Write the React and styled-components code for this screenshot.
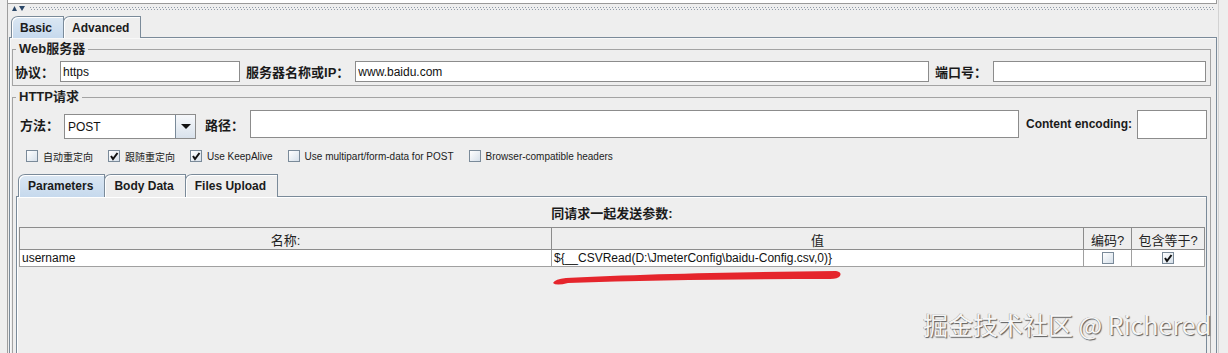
import styled, { createGlobalStyle } from "styled-components";

const GlobalStyle = createGlobalStyle`
  html, body {
    margin: 0;
    padding: 0;
    background: #eeeeee;
  }
  body {
    font-family: "Liberation Sans", "Noto Sans CJK SC", sans-serif;
    color: #111;
  }
  * { box-sizing: border-box; }
`;

const options = [
  { label: "自动重定向", checked: false },
  { label: "跟随重定向", checked: true },
  { label: "Use KeepAlive", checked: true },
  { label: "Use multipart/form-data for POST", checked: false },
  { label: "Browser-compatible headers", checked: false },
];

export default function App() {
  return (
    <>
      <GlobalStyle />
      <Page>
        <Frame>
          <TopStub />
          <Splitter>
            <svg width="14" height="5" viewBox="0 0 14 5">
              <path d="M0 5 L2.5 0 L5 5 Z" fill="#2b4768" />
              <path d="M7 0 L13 0 L10 5 Z" fill="#2b4768" />
            </svg>
            <Dots />
          </Splitter>

          <TabStrip $pad={3}>
            <Tab $active>Basic</Tab>
            <Tab>Advanced</Tab>
          </TabStrip>

          <TabPane>
            <Group>
              <Legend>Web服务器</Legend>
              <FieldRow>
                <Label>协议：</Label>
                <TextInput $w={180} defaultValue="https" readOnly />
                <Label>服务器名称或IP：</Label>
                <TextInput $grow defaultValue="www.baidu.com" readOnly />
                <Label>端口号：</Label>
                <TextInput $w={213} readOnly />
              </FieldRow>
            </Group>

            <Group>
              <Legend>HTTP请求</Legend>
              <MethodRow>
                <Label>方法：</Label>
                <Combo $ml={5}>
                  <ComboText>POST</ComboText>
                  <ComboButton>
                    <Caret />
                  </ComboButton>
                </Combo>
                <Label $ml={9}>路径：</Label>
                <TextInput $ml={6} $h={28} $grow readOnly />
                <Label $ml={7} $size={12}>Content encoding:</Label>
                <TextInput $ml={5} $h={29} $w={70} readOnly />
              </MethodRow>

              <OptionRow>
                {options.map((o) => (
                  <Option key={o.label}>
                    <CheckBox checked={o.checked} />
                    <OptionText>{o.label}</OptionText>
                  </Option>
                ))}
              </OptionRow>

              <TabStrip $pad={3} $top={12} $h={22}>
                <Tab $active $small>Parameters</Tab>
                <Tab $small>Body Data</Tab>
                <Tab $small>Files Upload</Tab>
              </TabStrip>

              <ParamPane>
                <Caption>同请求一起发送参数:</Caption>
                <Table>
                  <colgroup>
                    <col style={{ width: 532 }} />
                    <col style={{ width: 532 }} />
                    <col style={{ width: 48 }} />
                    <col style={{ width: 73 }} />
                  </colgroup>
                  <thead>
                    <tr>
                      <Th>名称:</Th>
                      <Th>值</Th>
                      <Th>编码?</Th>
                      <Th>包含等于?</Th>
                    </tr>
                  </thead>
                  <tbody>
                    <tr>
                      <Td>username</Td>
                      <Td>{"${__CSVRead(D:\\JmeterConfig\\baidu-Config.csv,0)}"}</Td>
                      <Td $center>
                        <CheckBox />
                      </Td>
                      <Td $center>
                        <CheckBox checked />
                      </Td>
                    </tr>
                  </tbody>
                </Table>
              </ParamPane>
            </Group>
          </TabPane>
        </Frame>

        <Scribble width="300" height="24" viewBox="548 264 300 24">
          <path
            d="M553 283 Q555 279 566 278 C640 274 740 272 836 271 Q842 272 840 276 Q838 279 830 279 C740 279 650 280 568 283 Q556 286 553 283 Z"
            fill="#e5252c"
          />
        </Scribble>

        <Watermark>掘金技术社区 @ Richered</Watermark>
      </Page>
    </>
  );
}

function CheckBox({ checked }) {
  return (
    <Box>
      {checked && (
        <svg width="10" height="10" viewBox="0 0 10 10">
          <path d="M2 5 L4 8 L8.5 2" stroke="#111" strokeWidth="2" fill="none" />
        </svg>
      )}
    </Box>
  );
}

const Page = styled.div`
  position: relative;
  width: 1228px;
  height: 353px;
  overflow: hidden;
`;

const Frame = styled.div`
  margin-left: 7px;
  width: 1212px;
  min-height: 353px;
  border-left: 1px solid #9e9e9e;
  border-right: 1px solid #d2d2d2;
`;

const TopStub = styled.div`
  height: 4px;
  margin-right: 1px;
  background: #ffffff;
  border-bottom: 1px solid #9a9a9a;
  border-right: 1px solid #9a9a9a;
`;

const Splitter = styled.div`
  height: 8px;
  display: flex;
  align-items: center;
  gap: 4px;
  padding-left: 4px;
  padding-right: 3px;
`;

const Dots = styled.div`
  flex: 1;
  height: 3px;
  background-image: linear-gradient(90deg, #8e9aa8 1px, transparent 1px),
    linear-gradient(90deg, #8e9aa8 1px, transparent 1px);
  background-size: 3px 1px, 3px 1px;
  background-position: 0 0, 1px 2px;
  background-repeat: repeat-x;
`;

const TabStrip = styled.div`
  position: relative;
  z-index: 1;
  display: flex;
  align-items: flex-end;
  height: ${({ $h }) => $h || 21}px;
  margin-top: ${({ $top }) => $top || 4}px;
  padding-left: ${({ $pad }) => $pad}px;
`;

const Tab = styled.div`
  display: flex;
  align-items: center;
  height: ${({ $small }) => ($small ? 23 : 22)}px;
  margin-bottom: -1px;
  margin-right: -1px;
  padding: 0 ${({ $small }) => ($small ? 11 : 11)}px 0 ${({ $small }) => ($small ? 9 : 8)}px;
  border: 1px solid #7a8a99;
  border-bottom: none;
  border-top-left-radius: 7px 6px;
  font-size: 12px;
  font-weight: bold;
  color: #1b1b1b;
  background: ${({ $active }) =>
    $active ? "linear-gradient(180deg, #dbe7f3 0%, #c6d9ed 100%)" : "#eeeeee"};
  box-shadow: inset 1px 1px 0 #ffffff;
`;

const TabPane = styled.div`
  height: 316px;
  margin: 0 1px;
  padding: 0 5px 0 2px;
  border: 1px solid #7a8a99;
  border-bottom: none;
  background: #eeeeee;
  box-shadow: inset 1px 1px 0 #f8f8f8;
`;

const Group = styled.fieldset`
  margin: 2px 0 0;
  padding: 0 3px 3px 2px;
  min-width: 0;
  border: 1px solid #a3a3a3;
`;

const Legend = styled.legend`
  margin-left: 1px;
  padding: 0 3px;
  font-size: 13px;
  font-weight: bold;
  line-height: 18px;
  color: #1e1e1e;
`;

const FieldRow = styled.div`
  display: flex;
  align-items: center;
  gap: 6px;
  height: 21px;
  margin-top: 3px;
  padding-right: 1px;
`;

const MethodRow = styled.div`
  display: flex;
  align-items: center;
  height: 30px;
  margin-top: 3px;
  padding-left: 5px;
`;

const Label = styled.span`
  margin-left: ${({ $ml }) => $ml || 0}px;
  font-size: ${({ $size }) => $size || 13}px;
  font-weight: bold;
  white-space: nowrap;
  color: #1a1a1a;
`;

const TextInput = styled.input`
  flex: ${({ $grow }) => ($grow ? "1 1 0" : "none")};
  width: ${({ $w }) => ($w ? `${$w}px` : "auto")};
  min-width: 0;
  height: ${({ $h }) => $h || 21}px;
  margin: 0 0 0 ${({ $ml }) => $ml || 0}px;
  padding: 0 2px;
  border: 1px solid #8c8c8c;
  background: #ffffff;
  font-family: "Liberation Sans", "Noto Sans CJK SC", sans-serif;
  font-size: 12px;
  color: #111;
  outline: none;
`;

const Combo = styled.div`
  display: flex;
  align-self: flex-end;
  width: 132px;
  height: 25px;
  margin-left: ${({ $ml }) => $ml}px;
  border: 1px solid #8c8c8c;
  background: #ffffff;
`;

const ComboText = styled.div`
  flex: 1;
  display: flex;
  align-items: center;
  padding-left: 3px;
  font-size: 12px;
  color: #111;
`;

const ComboButton = styled.div`
  width: 20px;
  display: flex;
  align-items: center;
  justify-content: center;
  border-left: 1px solid #7a8a99;
  background: linear-gradient(180deg, #f6f8fb 0%, #d9e2ec 100%);
`;

const Caret = styled.div`
  width: 0;
  height: 0;
  border-left: 5px solid transparent;
  border-right: 5px solid transparent;
  border-top: 5px solid #111;
`;

const OptionRow = styled.div`
  display: flex;
  align-items: center;
  height: 12px;
  margin-top: 11px;
  padding-left: 11px;
`;

const Option = styled.div`
  display: flex;
  align-items: center;
  gap: 5px;
  margin-right: 15px;
`;

const OptionText = styled.span`
  font-size: 10px;
  color: #222;
  white-space: nowrap;
`;

const Box = styled.span`
  display: inline-flex;
  align-items: center;
  justify-content: center;
  width: 12px;
  height: 12px;
  vertical-align: middle;
  border: 1px solid #7a8a99;
  background: linear-gradient(135deg, #ffffff 0%, #d6e0ea 100%);
`;

const ParamPane = styled.div`
  height: 200px;
  margin-left: 1px;
  padding: 0 1px 0 2px;
  border: 1px solid #7a8a99;
  background: #eeeeee;
  box-shadow: inset 1px 1px 0 #ffffff;
`;

const Caption = styled.div`
  height: 30px;
  display: flex;
  align-items: center;
  justify-content: center;
  font-size: 13px;
  font-weight: bold;
  color: #1a1a1a;
`;

const Table = styled.table`
  width: 1185px;
  table-layout: fixed;
  border-collapse: collapse;
`;

const Th = styled.th`
  height: 21px;
  padding: 2px 0 0;
  border: 1px solid #8c8c8c;
  background: #eeeeee;
  font-size: 13px;
  font-weight: normal;
  text-align: center;
  color: #222;
`;

const Td = styled.td`
  height: 17px;
  padding: 0 2px;
  border: 1px solid #a0a0a0;
  background: #ffffff;
  font-size: 12px;
  line-height: 15px;
  color: #111;
  white-space: nowrap;
  overflow: hidden;
  vertical-align: middle;
  text-align: ${({ $center }) => ($center ? "center" : "left")};
`;

const Scribble = styled.svg`
  position: absolute;
  left: 548px;
  top: 264px;
`;

const Watermark = styled.div`
  position: absolute;
  left: 923px;
  top: 308px;
  font-family: "Noto Sans CJK SC", "Liberation Sans", sans-serif;
  font-size: 25px;
  line-height: 32px;
  color: #f6f6f6;
  white-space: nowrap;
  text-shadow: 1px 1px 1px #5a5a5a, -0.5px -0.5px 0.5px #9a9a9a;
`;
